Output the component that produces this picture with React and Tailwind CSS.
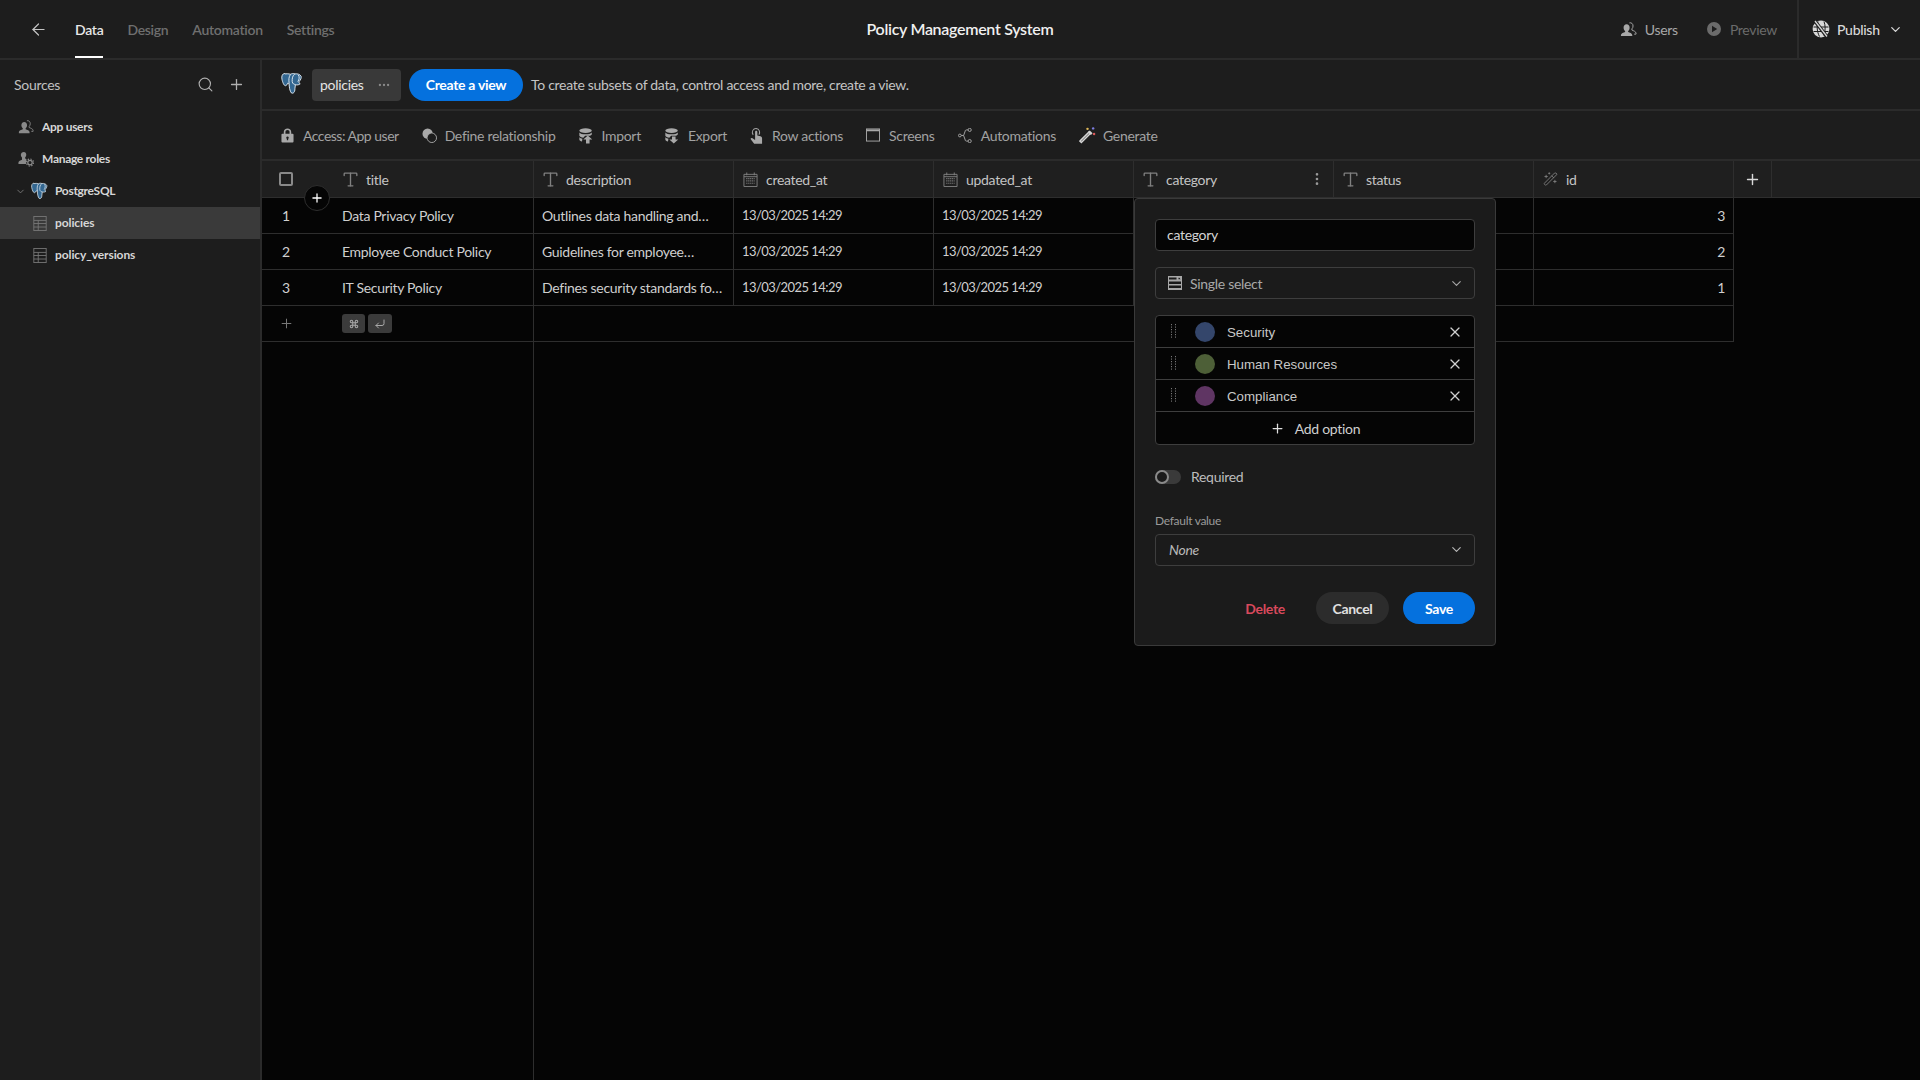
import { ArrowLeft, Search, Plus, ChevronDown, X, MoreVertical, Type, MoreHorizontal, WandSparkles, Command, CornerDownLeft } from 'lucide-react';

const Elephant = ({ className }) => (
  <svg viewBox="0 0 24 24" className={className}>
    <path d="M4 1.500C1.500 1.500.3 4.500 1 7.500c.6 3 2 6.800 3.600 6.800 1.200 0 1.900-1.500 2.400-2.600.5.3 1 .5 1.500.5 0 3 .5 7.800 2.500 9.800 2 .6 3.500-1 3.500-4.500l.5-4.200c2 .5 4 0 5-1-1-.5-1.500-1-1-2.500 1.500-1.500 2.500-3.800 2-5.300-1-2-4-3-6.500-2.500-1.500-.5-3-.5-4.500.3-2-.5-4-.7-6-.3z" fill="#336791" stroke="#dfe8ef" strokeWidth="1" />
    <path d="M10 2.500C8 5 8 8 8.500 12M14.500 2c-2.500 1.500-3 5-2.800 8 .2 2.500 2.300 3 3.300 3M18 3c1.500 2 1.200 5-.5 7" fill="none" stroke="#dfe8ef" strokeWidth="1" />
  </svg>
);

const UsersIcon = ({ className }) => (
  <svg viewBox="0 0 18 18" fill="currentColor" className={className}>
    <path d="M7 3.500c2 0 3.200 1.500 3.200 3.600 0 1.500-.7 2.800-1.600 3.400v1.100c1.600.6 4.400 1.500 4.400 3.100V16H1v-1.300c0-1.600 2.900-2.500 4.400-3.100v-1.100c-.9-.6-1.600-1.900-1.600-3.400C3.800 5 5 3.500 7 3.500z" />
    <path d="M10 2c2-.6 3.800.9 3.800 3.300 0 1.300-.5 2.400-1.200 3v1.300c1.500.6 4.400 1.700 4.400 3.300v1h-2" fill="none" stroke="currentColor" strokeWidth="1" />
  </svg>
);

const RolesIcon = ({ className }) => (
  <svg viewBox="0 0 18 18" fill="currentColor" className={className}>
    <path d="M6.500 1c1.800 0 2.800 1.400 2.800 3.200 0 1.300-.6 2.400-1.300 3v1.300c.5.200 1 .4 1.500.7v1.800c-.5.800-.7 2-.2 3.500H.5v-1.600c0-1.500 2.700-2.400 4-3V7.200c-.8-.6-1.300-1.700-1.300-3C3.200 2.400 4.700 1 6.500 1z" />
    <circle cx="13.500" cy="13" r="2.500" fill="none" stroke="currentColor" strokeWidth="1.400" />
    <circle cx="13.500" cy="13" r="4" fill="none" stroke="currentColor" strokeWidth="1.300" strokeDasharray="1.500 1.640" />
  </svg>
);

const TableIcon = ({ className }) => (
  <svg viewBox="0 0 15 17" fill="none" stroke="currentColor" strokeWidth="1" className={className}>
    <rect x=".5" y=".5" width="14" height="16" />
    <path d="M.5 5h14M.5 8.500h14M.5 12.500h14M5.500 5v11.500" />
  </svg>
);

const CalendarIcon = ({ className }) => (
  <svg viewBox="0 0 16 16" fill="none" stroke="currentColor" className={className}>
    <path d="M1 2.500h14v13H1zM4 .5v3M12 .5v3M1 5h14" strokeWidth="1" />
    <path d="M3.500 7h9M3.500 9.500h9M3.500 12h9" strokeWidth="1.300" strokeDasharray="1.200 .9" />
  </svg>
);

const LockIcon = ({ className }) => (
  <svg viewBox="0 0 14 16" fill="currentColor" className={className}>
    <path fillRule="evenodd" d="M3 6V4.200C3 1.900 4.700.5 7 .5s4 1.400 4 3.700V6h1.500c.6 0 1 .4 1 1v7.500c0 .6-.4 1-1 1h-11c-.6 0-1-.4-1-1V7c0-.6.4-1 1-1zm1.800 0h4.400V4.200C9.200 3 8.300 2.200 7 2.200S4.800 3 4.800 4.200zM7 9a1.400 1.400 0 00-.7 2.600V13h1.400v-1.400A1.400 1.400 0 007 9z" />
  </svg>
);

const RelationIcon = ({ className }) => (
  <svg viewBox="0 0 16 16" className={className}>
    <circle cx="6" cy="6" r="5.500" fill="currentColor" />
    <circle cx="10.500" cy="10.500" r="5" fill="#1d1d1d" stroke="currentColor" strokeWidth="1" />
    <path d="M6 11.500a5 5 0 015.500-5.500A5.500 5.500 0 016 11.500z" fill="#1d1d1d" />
  </svg>
);

const DbIcon = ({ down, className }) => (
  <svg viewBox="0 0 18 18" fill="currentColor" className={className}>
    <ellipse cx="8.500" cy="3.500" rx="7" ry="2.700" />
    <path d="M1.500 5.500c1 1.500 3.500 2.200 7 2.200s6-.7 7-2.200V8c-.5.500-1.200 1-2 1.300H8L6 11.500c-2.200-.3-3.800-1-4.500-2.200zM1.500 11c.8.800 2 1.300 3.500 1.600l-.500 3.200c-1.700-.5-3-1.300-3-2.400z" />
    {down ? (
      <path d="M9 10h4v3.500h3l-5 4.500-5-4.500h3z" />
    ) : (
      <path d="M11 9l5 4.500h-3V18H9v-4.500H6z" />
    )}
  </svg>
);

const HandIcon = ({ className }) => (
  <svg viewBox="0 0 14 18" fill="currentColor" className={className}>
    <path d="M6.700 1A4.700 4.700 0 003 8.600l.9-.9a3.400 3.400 0 115.900-2.200c0 .8-.2 1.500-.7 2.100l.9.900a4.700 4.700 0 00-3.300-7.500z" />
    <path d="M5.500 5.200c0-.7.500-1.200 1.200-1.200s1.200.5 1.200 1.200V9l3.300.8c1 .3 1.800 1 1.800 2.100V18H4.500l-3.700-5c-.5-.7.500-1.800 1.400-1.200l3.300 2z" />
  </svg>
);

const ScreenIcon = ({ className }) => (
  <svg viewBox="0 0 15 14" fill="none" stroke="currentColor" className={className}>
    <rect x=".5" y=".5" width="14" height="13" strokeWidth="1" />
    <path d="M.5 2h14" strokeWidth="2" />
  </svg>
);

const FlowIcon = ({ className }) => (
  <svg viewBox="0 0 15 16" fill="none" stroke="currentColor" strokeWidth="1" className={className}>
    <circle cx="2" cy="8" r="1.500" />
    <circle cx="12.500" cy="2" r="1.700" />
    <circle cx="12.500" cy="14" r="1.700" />
    <path d="M3.500 8H6l2-5.500c.2-.4.500-.5 1-.5h1.800M6 8l2 5.500c.2.400.5.500 1 .5h1.800" />
  </svg>
);

const MagicIcon = ({ className }) => (
  <svg viewBox="0 0 18 18" className={className}>
    <path d="M1 15.500L10.500 6l1.500 1.500L2.500 17z" fill="none" stroke="#d4d4d4" strokeWidth="1.600" />
    <path d="M10.500 5l3 3" stroke="#d4d4d4" strokeWidth="2.500" />
    <circle cx="9" cy="2.500" r="1.300" fill="#e0b95a" />
    <circle cx="15" cy="2" r="1.300" fill="#7d7de0" />
    <circle cx="16" cy="8" r="1.300" fill="#dd5a5a" />
  </svg>
);

const PreviewIcon = ({ className }) => (
  <svg viewBox="0 0 14 14" className={className}>
    <path fillRule="evenodd" fill="currentColor" d="M7 0a7 7 0 110 14A7 7 0 017 0zM5 3.800v6.400L10.200 7z" />
  </svg>
);

const PublishIcon = ({ className }) => (
  <svg viewBox="0 0 18 18" className={className}>
    <circle cx="9" cy="9" r="8.400" fill="currentColor" />
    <path d="M6 1.500C4.500 6 5 12 7.500 16.500M12 1.500c1.500 4 1.500 9 0 14M1.500 7h15M1.500 11.500h15" fill="none" stroke="#1d1d1d" strokeWidth="1" />
    <path d="M2.500 .5l13 17" stroke="#1d1d1d" strokeWidth="3.500" />
    <path d="M3 1l12 15.500" stroke="currentColor" strokeWidth="1.300" />
  </svg>
);

const SelectIcon = ({ className }) => (
  <svg viewBox="0 0 14 14" fill="currentColor" className={className}>
    <path fillRule="evenodd" d="M0 0h14v14H0zm1 1.500V3.500h7.500v-2zm9.500.2V3.200h2L11.500 1.700zM1 5.500V8h12V5.500zm0 4V12h12V9.500z" />
  </svg>
);

const GripIcon = () => (
  <svg viewBox="0 0 6 15" className="w-[6px] h-[15px] text-[#777]" fill="currentColor">
    {[0, 2.500, 5, 7.500, 10, 12.500].map((y) => (
      <g key={y}>
        <rect x="0" y={y} width="1" height="1.200" />
        <rect x="4" y={y} width="1" height="1.200" />
      </g>
    ))}
  </svg>
);

const tools = [
  { label: 'Access: App user', icon: <LockIcon className="w-[13px] h-[15px]" />, gap: 'gap-[9px] tracking-[-0.5px]' },
  { label: 'Define relationship', icon: <RelationIcon className="w-[15px] h-[15px]" />, gap: 'gap-[8px]' },
  { label: 'Import', icon: <DbIcon className="w-[16px] h-[17px]" />, gap: 'gap-[7px]' },
  { label: 'Export', icon: <DbIcon down className="w-[16px] h-[17px]" />, gap: 'gap-[8px]' },
  { label: 'Row actions', icon: <HandIcon className="w-[13px] h-[17px]" />, gap: 'gap-[9px]' },
  { label: 'Screens', icon: <ScreenIcon className="w-[14px] h-[14px]" />, gap: 'gap-[9px]' },
  { label: 'Automations', icon: <FlowIcon className="w-[14px] h-[15px]" />, gap: 'gap-[9px]' },
  { label: 'Generate', icon: <MagicIcon className="w-[17px] h-[18px]" />, gap: 'gap-[7px]' },
];

const rows = [
  { n: 1, title: 'Data Privacy Policy', desc: 'Outlines data handling and…', id: 3 },
  { n: 2, title: 'Employee Conduct Policy', desc: 'Guidelines for employee…', id: 2 },
  { n: 3, title: 'IT Security Policy', desc: 'Defines security standards fo…', id: 1 },
];

const options = [
  { name: 'Security', color: 'bg-[#34466b]' },
  { name: 'Human Resources', color: 'bg-[#4d5f37]' },
  { name: 'Compliance', color: 'bg-[#5f3563]' },
];

const HeaderCell = ({ icon, label, children }) => (
  <div className="w-[200px] shrink-0 h-full border-r border-[#2e2e2e] flex items-center pl-[9px] pr-[8px] text-[14px] text-[#c4c4c4]">
    <span className="w-[15px] flex justify-center text-[#808080]">{icon}</span>
    <span className="ml-[8px] flex-1">{label}</span>
    {children}
  </div>
);

const TypeIcon = () => <Type className="w-[19px] h-[19px] shrink-0" strokeWidth={1.7} />;
const DateIcon = () => <CalendarIcon className="w-[15px] h-[15px]" />;

const Cell = ({ children, className = '' }) => (
  <div className={`w-[200px] shrink-0 h-full border-r border-[#2e2e2e] flex items-center px-[8px] text-[14px] text-[#cfcfcf] whitespace-nowrap overflow-hidden ${className}`}>
    {children}
  </div>
);

const Stamp = () => <span className="pt-[1px] text-[13px] tracking-[-0.55px]">13/03/2025 14:29</span>;

export default function App() {
  return (
    <div className="w-full h-screen flex flex-col overflow-hidden bg-[#050505] font-['Lato','Noto_Sans',sans-serif] text-[14px] tracking-[-0.3px] text-[#d0d0d0]">
      {/* Top nav */}
      <header className="h-[60px] shrink-0 flex items-center bg-[#1d1d1d] border-b-2 border-[#2b2b2b]">
        <div className="flex-1 flex items-center h-full">
          <ArrowLeft className="ml-[29px] w-[19px] h-[19px] text-[#c4c4c4]" strokeWidth={1.5} />
          <nav className="flex h-full items-center gap-[24px] ml-[27px] text-[14px] font-semibold text-[#6f6f6f]">
            <span className="relative h-full flex items-center text-[#e8e8e8]">
              Data
              <span className="absolute left-0 right-0 bottom-0 h-[2px] bg-white" />
            </span>
            <span>Design</span>
            <span>Automation</span>
            <span>Settings</span>
          </nav>
        </div>
        <div className="text-[16px] font-semibold text-[#f0f0f0]">Policy Management System</div>
        <div className="flex-1 flex items-center justify-end h-full">
          <div className="flex items-center gap-[8px] text-[#a8a8a8]">
            <UsersIcon className="w-[17px] h-[17px]" />
            <span>Users</span>
          </div>
          <div className="flex items-center gap-[9px] ml-[29px] mr-[20px] text-[#6b6b6b]">
            <PreviewIcon className="w-[14px] h-[14px]" />
            <span>Preview</span>
          </div>
          <div className="h-full w-[123px] border-l-2 border-[#2b2b2b] flex items-center pl-[13px] text-[#d8d8d8] font-medium">
            <PublishIcon className="w-[18px] h-[18px]" />
            <span className="ml-[7px]">Publish</span>
            <ChevronDown className="w-[15px] h-[15px] ml-[8px]" strokeWidth={2} />
          </div>
        </div>
      </header>

      <div className="flex-1 flex min-h-0">
        {/* Sidebar */}
        <aside className="w-[262px] shrink-0 bg-[#1d1d1d] border-r-2 border-[#2b2b2b]">
          <div className="h-[48px] mb-[3px] flex items-center pl-[14px] pr-[15px] text-[#c0c0c0]">
            <span className="flex-1">Sources</span>
            <Search className="w-[17px] h-[17px] text-[#b0b0b0] mr-[14px]" strokeWidth={1.6} />
            <Plus className="w-[17px] h-[17px] text-[#b0b0b0]" strokeWidth={1.8} />
          </div>
          <div className="text-[12px] font-bold text-[#d6d6d6]">
            <div className="h-[32px] flex items-center pl-[18px] gap-[8px]">
              <UsersIcon className="w-[16px] h-[16px] text-[#8a8a8a]" />
              App users
            </div>
            <div className="h-[32px] flex items-center pl-[18px] gap-[8px]">
              <RolesIcon className="w-[16px] h-[16px] text-[#8a8a8a]" />
              Manage roles
            </div>
            <div className="h-[32px] flex items-center pl-[15px]">
              <ChevronDown className="w-[11px] h-[11px] text-[#777]" strokeWidth={2} />
              <Elephant className="w-[18px] h-[18px] ml-[5px]" />
              <span className="ml-[6px]">PostgreSQL</span>
            </div>
            <div className="h-[32px] flex items-center pl-[33px] gap-[8px] bg-[#3a3a3a] tracking-[-0.1px]">
              <TableIcon className="w-[14px] h-[15px] text-[#777]" />
              policies
            </div>
            <div className="h-[32px] flex items-center pl-[33px] gap-[8px] tracking-[-0.1px]">
              <TableIcon className="w-[14px] h-[15px] text-[#777]" />
              policy_versions
            </div>
          </div>
        </aside>

        {/* Main */}
        <main className="flex-1 flex flex-col min-w-0">
          <div className="h-[51px] shrink-0 flex items-center pl-[19px] bg-[#1d1d1d] border-b-2 border-[#2b2b2b]">
            <Elephant className="w-[23px] h-[23px] -mt-[3px]" />
            <div className="ml-[8px] w-[89px] h-[32px] rounded-[4px] bg-[#393939] flex items-center pl-[8px] pr-[10px] text-[#e4e4e4]">
              <span className="flex-1">policies</span>
              <MoreHorizontal className="w-[14px] h-[14px] text-[#8a8a8a]" strokeWidth={2} />
            </div>
            <button className="ml-[8px] w-[114px] h-[32px] rounded-full bg-[#0571de] text-white text-[14px] font-bold">Create a view</button>
            <span className="ml-[8px] text-[#c4c4c4]">To create subsets of data, control access and more, create a view.</span>
          </div>

          <div className="h-[50px] shrink-0 flex items-center pl-[19px] gap-[23px] bg-[#1d1d1d] border-b-2 border-[#2b2b2b] text-[#a2a2a2]">
            {tools.map((t) => (
              <div key={t.label} className={`flex items-center ${t.gap}`}>
                <span className="text-[#a8a8a8] flex">{t.icon}</span>
                <span>{t.label}</span>
              </div>
            ))}
          </div>

          {/* Grid */}
          <div className="flex-1 relative flex flex-col min-h-0">
            <div className="h-[37px] shrink-0 flex bg-[#1f1f1f] border-b border-[#2e2e2e]">
              <div className="w-[72px] shrink-0 flex items-center pl-[17px]">
                <span className="w-[14px] h-[14px] rounded-[2px] border-2 border-[#8a8a8a]" />
              </div>
              <HeaderCell icon={<TypeIcon />} label="title" />
              <HeaderCell icon={<TypeIcon />} label="description" />
              <HeaderCell icon={<DateIcon />} label="created_at" />
              <HeaderCell icon={<DateIcon />} label="updated_at" />
              <HeaderCell icon={<TypeIcon />} label="category">
                <MoreVertical className="w-[16px] h-[16px] text-[#9a9a9a]" strokeWidth={2} />
              </HeaderCell>
              <HeaderCell icon={<TypeIcon />} label="status" />
              <HeaderCell icon={<WandSparkles className="w-[16px] h-[16px]" strokeWidth={1.4} />} label="id" />
              <div className="w-[38px] shrink-0 h-full border-r border-[#2e2e2e] flex items-center justify-center text-[#d8d8d8]">
                <Plus className="w-[17px] h-[17px]" strokeWidth={2} />
              </div>
            </div>

            {rows.map((r) => (
              <div key={r.n} className="h-[36px] shrink-0 w-[1472px] flex border-b border-[#2e2e2e]">
                <div className="w-[72px] shrink-0 flex items-center pl-[20px] text-[#d0d0d0]">{r.n}</div>
                <Cell>{r.title}</Cell>
                <Cell>{r.desc}</Cell>
                <Cell><Stamp /></Cell>
                <Cell><Stamp /></Cell>
                <Cell />
                <Cell />
                <Cell className="justify-end">{r.id}</Cell>
              </div>
            ))}

            <div className="h-[36px] shrink-0 w-[1472px] flex border-b border-r border-[#2e2e2e]">
              <div className="w-[72px] shrink-0 flex items-center pl-[17px] text-[#777]">
                <Plus className="w-[15px] h-[15px]" strokeWidth={1.6} />
              </div>
              <div className="w-[200px] shrink-0 h-full border-r border-[#2e2e2e] flex items-center pl-[8px] gap-[3px]">
                <span className="w-[23px] h-[19px] rounded-[3px] bg-[#3b3b3b] flex items-center justify-center text-[#a8a8a8]">
                  <Command className="w-[10px] h-[10px]" strokeWidth={2.5} />
                </span>
                <span className="w-[24px] h-[19px] rounded-[3px] bg-[#3b3b3b] flex items-center justify-center text-[#a8a8a8]">
                  <CornerDownLeft className="w-[12px] h-[12px]" strokeWidth={2} />
                </span>
              </div>
            </div>

            <div className="flex-1 w-[272px] border-r border-[#2e2e2e]" />

            {/* Add column badge */}
            <div className="absolute left-[42px] top-[24px] w-[26px] h-[26px] rounded-full bg-[#050505] border border-[#2e2e2e] flex items-center justify-center text-white">
              <Plus className="w-[14px] h-[14px]" strokeWidth={2.2} />
            </div>

            {/* Column editor popover */}
            <div className="absolute left-[872px] top-[37px] w-[362px] h-[448px] bg-[#1b1b1b] border border-[#3a3a3a] rounded-[4px] px-[20px] pt-[20px]">
              <div className="h-[32px] rounded-[4px] bg-[#050505] border border-[#3e3e3e] flex items-center px-[11px] pb-[2px] text-[#d4d4d4]">category</div>
              <div className="mt-[16px] h-[32px] rounded-[4px] border border-[#3e3e3e] flex items-center pl-[12px] pr-[10px] text-[#a8a8a8]">
                <SelectIcon className="w-[14px] h-[14px]" />
                <span className="ml-[8px] flex-1">Single select</span>
                <ChevronDown className="w-[15px] h-[15px]" strokeWidth={1.8} />
              </div>

              <div className="mt-[16px] rounded-[4px] bg-[#050505] border border-[#3e3e3e]">
                {options.map((o) => (
                  <div key={o.name} className="h-[32px] flex items-center border-b border-[#3e3e3e] pl-[15px] pr-[11px]">
                    <GripIcon />
                    <span className={`ml-[18px] w-[20px] h-[20px] rounded-full ${o.color}`} />
                    <span className="ml-[12px] pt-[2px] flex-1 font-['Liberation_Sans',sans-serif] text-[13.3px] tracking-normal text-[#c8c8c8]">{o.name}</span>
                    <X className="w-[16px] h-[16px] text-[#d0d0d0]" strokeWidth={1.8} />
                  </div>
                ))}
                <div className="h-[32px] flex items-center justify-center text-[#cfcfcf]">
                  <Plus className="w-[15px] h-[15px] text-[#e0e0e0]" strokeWidth={2} />
                  <span className="ml-[10px]">Add option</span>
                </div>
              </div>

              <div className="mt-[21px] flex items-center">
                <span className="relative w-[26px] h-[14px] rounded-full bg-[#3a3a3a]">
                  <span className="absolute left-0 top-0 w-[14px] h-[14px] rounded-full bg-[#1b1b1b] border-2 border-[#8a8a8a]" />
                </span>
                <span className="ml-[10px] text-[#bdbdbd]">Required</span>
              </div>

              <div className="mt-[26px] text-[12px] text-[#9a9a9a] leading-[16px]">Default value</div>
              <div className="mt-[5px] h-[32px] rounded-[4px] border border-[#3e3e3e] flex items-center pl-[13px] pr-[10px] pb-[1px] text-[#b8b8b8] italic">
                <span className="flex-1">None</span>
                <ChevronDown className="w-[15px] h-[15px]" strokeWidth={1.8} />
              </div>

              <div className="mt-[26px] flex items-center justify-end text-[14px] font-bold">
                <span className="text-[#d9495c] mr-[31px]">Delete</span>
                <button className="w-[73px] h-[32px] rounded-full bg-[#2c2c2c] text-[#e0e0e0] font-bold">Cancel</button>
                <button className="ml-[14px] w-[72px] h-[32px] rounded-full bg-[#0571de] text-white font-bold">Save</button>
              </div>
            </div>
          </div>
        </main>
      </div>
    </div>
  );
}
